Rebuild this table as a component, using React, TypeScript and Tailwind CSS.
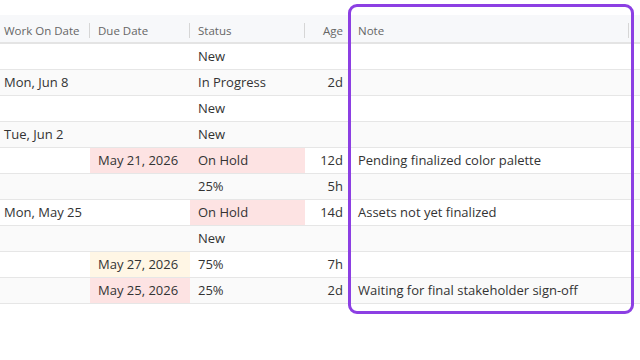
const rows = [
  { work: '', due: '', dueTone: '', status: 'New', statusTone: '', age: '', note: '' },
  { work: 'Mon, Jun 8', due: '', dueTone: '', status: 'In Progress', statusTone: '', age: '2d', note: '' },
  { work: '', due: '', dueTone: '', status: 'New', statusTone: '', age: '', note: '' },
  { work: 'Tue, Jun 2', due: '', dueTone: '', status: 'New', statusTone: '', age: '', note: '' },
  { work: '', due: 'May 21, 2026', dueTone: 'red', status: 'On Hold', statusTone: 'red', age: '12d', note: 'Pending finalized color palette' },
  { work: '', due: '', dueTone: '', status: '25%', statusTone: '', age: '5h', note: '' },
  { work: 'Mon, May 25', due: '', dueTone: '', status: 'On Hold', statusTone: 'red', age: '14d', note: 'Assets not yet finalized' },
  { work: '', due: '', dueTone: '', status: 'New', statusTone: '', age: '', note: '' },
  { work: '', due: 'May 27, 2026', dueTone: 'amber', status: '75%', statusTone: '', age: '7h', note: '' },
  { work: '', due: 'May 25, 2026', dueTone: 'red', status: '25%', statusTone: '', age: '2d', note: 'Waiting for final stakeholder sign-off' },
];

const tone = (t: string) =>
  t === 'red' ? 'bg-[#fde3e3]' : t === 'amber' ? 'bg-[#fff6e5]' : '';

function HeaderCell({ label, className, sep = true }: { label: string; className: string; sep?: boolean }) {
  return (
    <div className={`relative flex items-center h-full pt-[4px] ${className}`}>
      <span>{label}</span>
      {sep && <span className="absolute right-0 top-[8px] h-[15px] w-px bg-[#d6d6d6]" />}
    </div>
  );
}

export default function App() {
  return (
    <div
      className="relative w-[640px] h-[360px] bg-white overflow-hidden pt-[15px] text-[#333]"
      style={{ fontFamily: '"Open Sans", "Noto Sans", sans-serif' }}
    >
      <div className="flex h-[29px] bg-[#f7f8fa] border-b-2 border-[#e4e4e4] text-[11.5px] text-[#666]">
        <HeaderCell label="Work On Date" className="w-[90px] pl-1" />
        <HeaderCell label="Due Date" className="w-[100px] pl-2" />
        <HeaderCell label="Status" className="w-[115px] pl-2" />
        <HeaderCell label="Age" className="w-[44px] justify-end pr-[6px]" sep={false} />
        <HeaderCell label="Note" className="w-[280px] pl-[9px]" />
        <div className="flex-1" />
      </div>

      {rows.map((r, i) => (
        <div
          key={i}
          className={`flex h-[26px] border-b border-[#e6e6e6] text-[13px] ${i % 2 === 1 ? 'bg-[#fafafa]' : 'bg-white'}`}
        >
          <div className="w-[90px] pl-1 flex items-center">{r.work}</div>
          <div className={`w-[100px] pl-2 flex items-center ${tone(r.dueTone)}`}>{r.due}</div>
          <div className={`w-[115px] pl-2 flex items-center ${tone(r.statusTone)}`}>{r.status}</div>
          <div className="w-[44px] pr-[6px] flex items-center justify-end">{r.age}</div>
          <div className="w-[280px] pl-[9px] flex items-center whitespace-nowrap">{r.note}</div>
          <div className="flex-1" />
        </div>
      ))}

      {/* highlight around the Note column */}
      <div className="absolute left-[348px] top-[4px] w-[286px] h-[310px] rounded-[9px] border-[3px] border-[#8c3fe3] pointer-events-none" />
    </div>
  );
}
